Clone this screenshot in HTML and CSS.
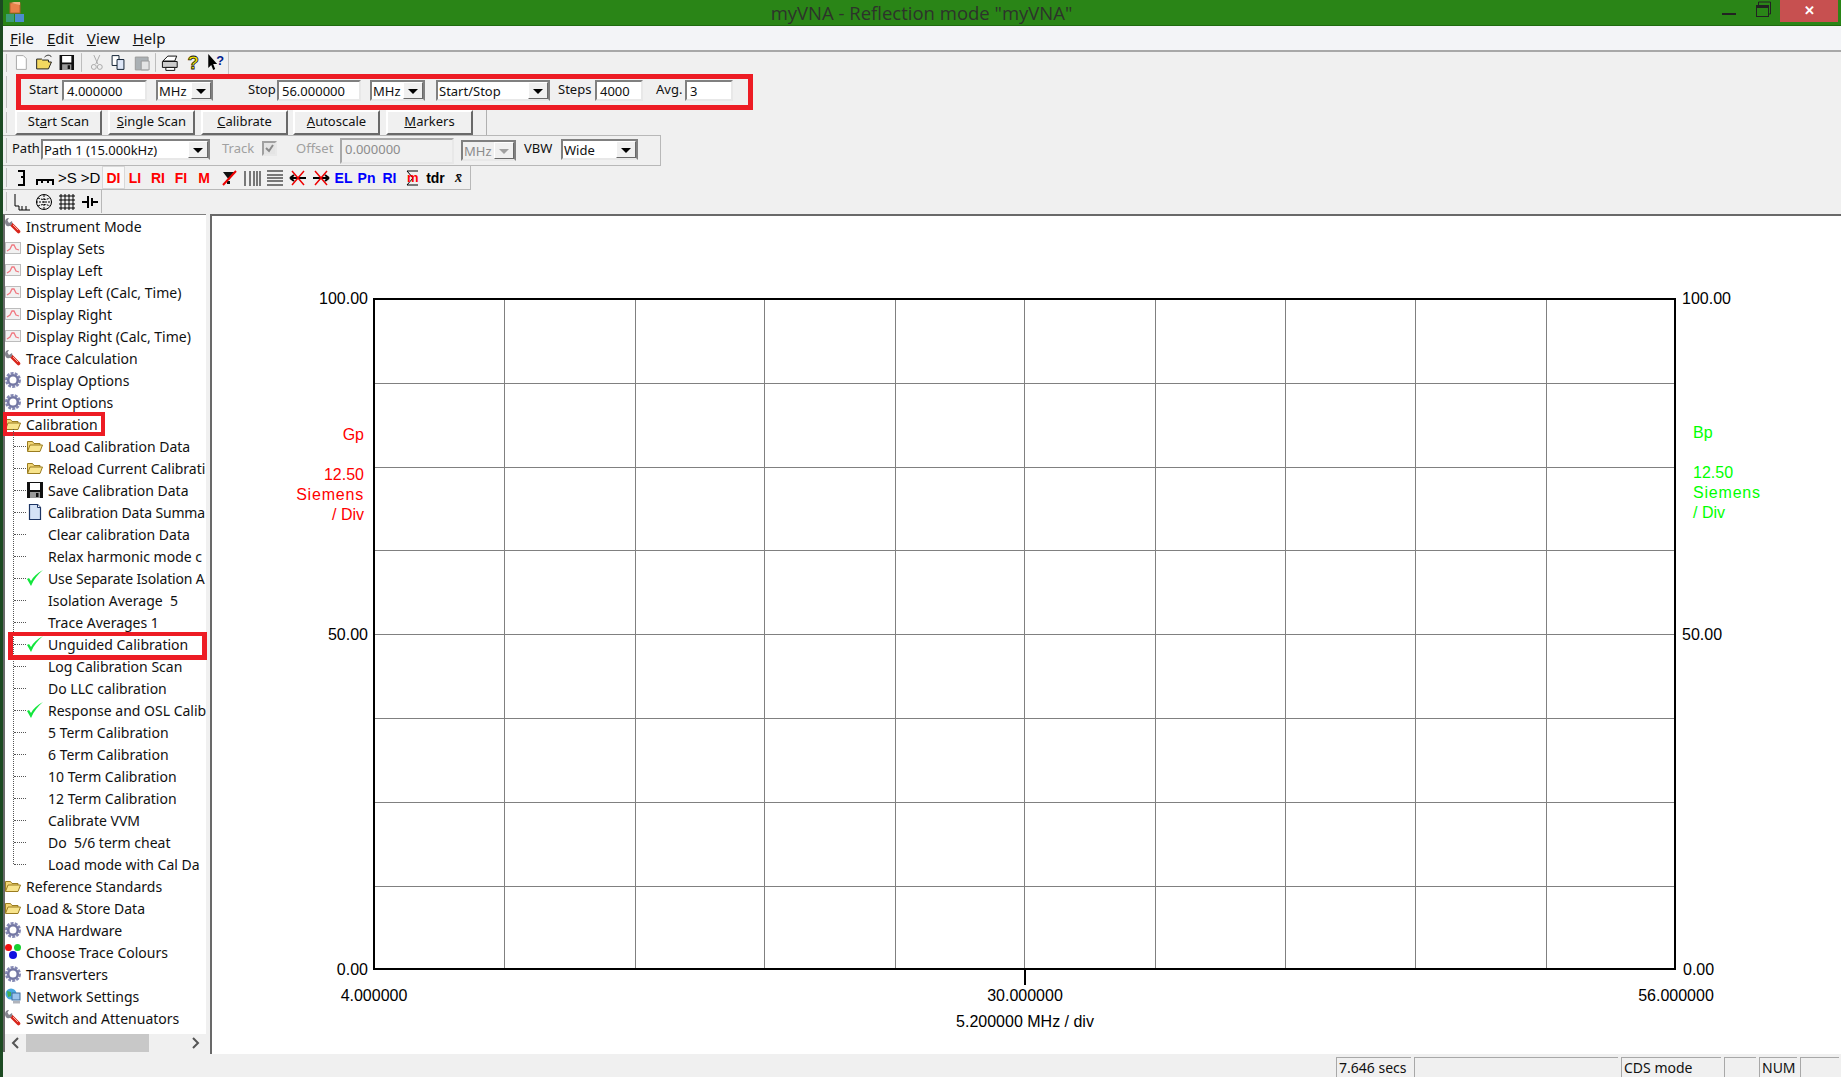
FILE: index.html
```html
<!DOCTYPE html>
<html lang="en">
<head>
<meta charset="UTF-8">
<title>myVNA</title>
<link rel="stylesheet" href="styles.css">
</head>
<body>
<svg class="defs" width="0" height="0">
  <symbol id="i-wrench" viewBox="0 0 16 16"><path d="M6.500 6.500l7 7" stroke="#d8261c" stroke-width="3.600" stroke-linecap="round"/><path d="M0 4c0-2 1-4 4-4L2.500 2.500 4 5l3-2c1 3-1 6-5 5C1 7.500 0 6 0 4z" fill="#85858e"/><path d="M8 7l5 5" stroke="#f6b0a0"/></symbol>
  <symbol id="i-chart" viewBox="0 0 16 16"><rect x=".5" y="2.500" width="15" height="11" fill="#f2f2f2" stroke="#bcbcbc"/><path d="M2 11l3-2 2-4 2 0 2 4 3 1" fill="none" stroke="#f07880" stroke-width="1.300"/></symbol>
  <symbol id="i-gear" viewBox="0 0 16 16"><circle cx="8" cy="8" r="6.800" fill="none" stroke="#8488b4" stroke-width="2.400" stroke-dasharray="3 1.200"/><circle cx="8" cy="8" r="4.800" fill="none" stroke="#7478a4" stroke-width="2.600"/></symbol>
  <symbol id="i-folder" viewBox="0 0 16 16"><path d="M.5 13V3.500h5l1.500 2h6v1.500" fill="#f2d674" stroke="#9a7c20"/><path d="M.5 13.500l2.500-6.500h12.500l-2.500 6.500z" fill="#f8e48c" stroke="#9a7c20"/></symbol>
  <symbol id="i-save" viewBox="0 0 16 16"><path d="M0 0h16v16H0z" fill="#111"/><path d="M3 1h10v7H3z" fill="#fff"/><path d="M3 10h10v6H3z" fill="#999"/><path d="M9 11h2.500v4H9z" fill="#111"/></symbol>
  <symbol id="i-doc" viewBox="0 0 16 16"><path d="M2.500.5h8l3 3v12h-11z" fill="#d4e2f6" stroke="#1c3464" stroke-width="1.200"/><path d="M10.500.5v3h3" fill="#fff" stroke="#1c3464"/></symbol>
  <symbol id="i-check" viewBox="0 0 16 16"><path d="M0 9l2-1 2 3C6 7 10 3 16 0 11 4 7 9 4 16z" fill="#12e63c"/></symbol>
  <symbol id="i-dots" viewBox="0 0 16 16"><circle cx="3.500" cy="3.500" r="3.500" fill="#f01010"/><circle cx="12.500" cy="3.500" r="3.500" fill="#18d030"/><circle cx="8" cy="11" r="4" fill="#1010e0"/></symbol>
  <symbol id="i-net" viewBox="0 0 16 16"><circle cx="6" cy="6" r="5.500" fill="#48a8e0"/><path d="M2 3l4 1 0 4-3 1z" fill="#40b050"/><rect x="7" y="5" width="8" height="7" fill="#9cc4ec" stroke="#3c6c9c"/><path d="M8 13h7v2.500H8z" fill="#b0b4bc"/></symbol>
</svg>

<div class="desk"></div>
<div class="window">
  <div class="titlebar">
    <svg class="app-icon" width="20" height="21" viewBox="0 0 20 21"><rect x="5" y="1" width="10" height="10" fill="#e8824a" stroke="#b06030"/><rect x="1" y="12" width="8" height="8" fill="#3c9c78"/><rect x="10" y="12" width="9" height="8" fill="#4c8cd0"/><path d="M6 1l3-1h6v3" fill="#f0b080"/></svg>
    <div class="title">myVNA - Reflection mode "myVNA"</div>
    <div class="winbtns">
      <span class="win-min"></span>
      <svg class="win-max" width="15" height="16" viewBox="0 0 15 16"><path d="M2.500 4V1H14.500V13H12" fill="none" stroke="#222"/><rect x=".5" y="4.500" width="12" height="11" fill="none" stroke="#222"/><path d="M0 4h13v3H0z" fill="#222"/></svg>
      <span class="win-close">✕</span>
    </div>
  </div>

  <div class="menubar">
    <span><u>F</u>ile</span><span><u>E</u>dit</span><span><u>V</u>iew</span><span><u>H</u>elp</span>
  </div>

  <div class="bar bar-main">
    <svg width="220" height="21" viewBox="0 0 220 21">
      <path d="M5.500 3.500h7l3 3v11h-10z" fill="#fff" stroke="#a8a8a8"/>
      <path d="M26 17V7h5l1 1h6v2h3l-3 7z" fill="#f4d860" stroke="#222"/><path d="M34 5c3-3 6-2 7 0" fill="none" stroke="#222"/>
      <use href="#i-save" x="49" y="3" width="15" height="15"/>
      <path d="M71.500 1v19" stroke="#bbb"/>
      <path d="M84 3l4 9M90 3l-4 9" stroke="#aaa" fill="none"/><circle cx="84" cy="15" r="2.500" fill="none" stroke="#aaa"/><circle cx="90" cy="15" r="2.500" fill="none" stroke="#aaa"/>
      <path d="M102.500 3.500h7v10h-7z" fill="#fff" stroke="#123"/><path d="M107.500 7.500h7v10h-7z" fill="#dfe8f8" stroke="#123"/>
      <path d="M126 5h13v13h-13z" fill="#aab0b4" stroke="#999"/><path d="M132 9h8v9h-8z" fill="#e4e4e4" stroke="#999"/>
      <path d="M146.500 1v19" stroke="#bbb"/>
      <path d="M154 9l5-5h9l-2 5z" fill="#fff" stroke="#111"/><path d="M153.500 9.500h15v6h-15z" fill="#ccc" stroke="#111"/><path d="M157 15.500h9v3h-9z" fill="#fff" stroke="#111"/>
      <text class="ic-q" x="179" y="17">?</text>
      <path d="M200 2v14l3-3 2 5 2-1-2-5h4z" fill="#000"/><text class="ic-q ic-q-blue" x="208" y="13">?</text>
    </svg>
  </div>

  <div class="bar bar-range">
    <div class="range-box">
      <label class="f-start">Start</label>
      <div class="field w85">4.000000</div>
      <div class="combo w57 ml9">MHz<i></i></div>
      <label class="f-stop">Stop</label>
      <div class="field w84">56.000000</div>
      <div class="combo w55 ml9">MHz<i></i></div>
      <div class="combo w114 ml11">Start/Stop<i></i></div>
      <label class="f-steps">Steps</label>
      <div class="field w48">4000</div>
      <label class="f-avg">Avg.</label>
      <div class="field w48">3</div>
    </div>
  </div>

  <div class="bar bar-buttons">
    <button>St<u>a</u>rt Scan</button>
    <button class="ml6"><u>S</u>ingle Scan</button>
    <button class="ml6"><u>C</u>alibrate</button>
    <button class="ml5"><u>A</u>utoscale</button>
    <button class="ml6"><u>M</u>arkers</button>
  </div>

  <div class="bar bar-path">
    <label class="f-path">Path</label>
    <div class="combo w169">Path 1 (15.000kHz)<i></i></div>
    <label class="f-track off">Track</label>
    <span class="tick"><svg width="11" height="11" viewBox="0 0 11 11"><path d="M2 5l3 3 4-6" fill="none" stroke="#8a8a8a" stroke-width="2"/></svg></span>
    <label class="f-offset off">Offset</label>
    <div class="field off-field">0.000000</div>
    <div class="combo w55 ml7 off-combo">MHz<i></i></div>
    <label class="f-vbw">VBW</label>
    <div class="combo w77">Wide<i></i></div>
  </div>

  <div class="bar bar-tools">
    <span class="tb"><svg width="16" height="18" viewBox="0 0 16 18"><path d="M4 2h6v14H4M10 8H7" fill="none" stroke="#000" stroke-width="2"/></svg></span>
    <span class="tb"><svg width="18" height="18" viewBox="0 0 18 18"><path d="M1 16v-5h16v5M6 11v3M12 11v3" fill="none" stroke="#000" stroke-width="2"/></svg></span>
    <span class="tb black">&gt;S</span>
    <span class="tb black">&gt;D</span>
    <span class="tb red pressed">DI</span>
    <span class="tb red">LI</span>
    <span class="tb red">RI</span>
    <span class="tb red">FI</span>
    <span class="tb red">M</span>
    <span class="tb"><svg width="16" height="16" viewBox="0 0 16 16"><path d="M2 2h12l-6 8z" fill="#111"/><path d="M6 11h3v3H6z" fill="#111"/><path d="M15 1L2 15" stroke="#e00" stroke-width="2"/></svg></span>
    <span class="tb"><svg width="18" height="18" viewBox="0 0 18 18"><path d="M2 2v15M7 2v15M11 2v15M14 2v15M17 2v15" stroke="#000"/></svg></span>
    <span class="tb"><svg width="18" height="18" viewBox="0 0 18 18"><path d="M1 2h16M1 6h16M1 9h16M1 12h16M1 16h16" stroke="#000"/></svg></span>
    <span class="tb"><svg width="18" height="18" viewBox="0 0 18 18"><path d="M1 9h16M1 9l4-3M1 9l4 3" fill="none" stroke="#000" stroke-width="2"/><path d="M3 2l12 14M15 2L3 16" stroke="#e00" stroke-width="1.500"/></svg></span>
    <span class="tb"><svg width="18" height="18" viewBox="0 0 18 18"><path d="M1 9h16M17 9l-4-3M17 9l-4 3" fill="none" stroke="#000" stroke-width="2"/><path d="M3 2l12 14M15 2L3 16" stroke="#e00" stroke-width="1.500"/></svg></span>
    <span class="tb blue">EL</span>
    <span class="tb blue">Pn</span>
    <span class="tb blue">RI</span>
    <span class="tb"><svg width="14" height="18" viewBox="0 0 14 18"><path d="M12 2H1l6 7-6 7h11" fill="none" stroke="#000"/><text class="ic-m" x="1" y="13">m</text></svg></span>
    <span class="tb tdr">tdr</span>
    <span class="tb xbar">x̄</span>
  </div>

  <div class="bar bar-view">
    <span class="tb"><svg width="18" height="18" viewBox="0 0 18 18"><path d="M3 1v12h4v4h11M10 13v4M14 13v4" fill="none" stroke="#000"/></svg></span>
    <span class="tb"><svg width="18" height="18" viewBox="0 0 18 18"><circle cx="9" cy="9" r="7.500" fill="none" stroke="#000"/><path d="M1 9h16M3 5c4 2 8 2 12 0M3 13c4-2 8-2 12 0M9 2v14" fill="none" stroke="#000" stroke-dasharray="2 1"/></svg></span>
    <span class="tb"><svg width="18" height="18" viewBox="0 0 18 18"><path d="M1 3h16M1 7h16M1 11h16M1 15h16M3 1v16M7 1v16M11 1v16M15 1v16" stroke="#000"/></svg></span>
    <span class="tb"><svg width="18" height="18" viewBox="0 0 18 18"><path d="M1 9h5M12 9h5M7 3v12M11 5v8" fill="none" stroke="#000" stroke-width="2"/></svg></span>
  </div>

  <div class="main">
    <div class="tree">
      <ul class="rows">
        <li><svg><use href="#i-wrench"/></svg>Instrument Mode</li>
        <li><svg><use href="#i-chart"/></svg>Display Sets</li>
        <li><svg><use href="#i-chart"/></svg>Display Left</li>
        <li><svg><use href="#i-chart"/></svg>Display Left (Calc, Time)</li>
        <li><svg><use href="#i-chart"/></svg>Display Right</li>
        <li><svg><use href="#i-chart"/></svg>Display Right (Calc, Time)</li>
        <li><svg><use href="#i-wrench"/></svg>Trace Calculation</li>
        <li><svg><use href="#i-gear"/></svg>Display Options</li>
        <li><svg><use href="#i-gear"/></svg>Print Options</li>
        <li class="mark-cal"><svg><use href="#i-folder"/></svg>Calibration</li>
      </ul>
      <ul class="rows kids">
        <li><svg><use href="#i-folder"/></svg>Load Calibration Data</li>
        <li><svg><use href="#i-folder"/></svg>Reload Current Calibrati</li>
        <li><svg><use href="#i-save"/></svg>Save Calibration Data</li>
        <li class="fit"><svg><use href="#i-doc"/></svg>Calibration Data Summa</li>
        <li><svg></svg>Clear calibration Data</li>
        <li><svg></svg>Relax harmonic mode c</li>
        <li class="fit"><svg><use href="#i-check"/></svg>Use Separate Isolation A</li>
        <li><svg></svg>Isolation Average&nbsp; 5</li>
        <li><svg></svg>Trace Averages 1</li>
        <li class="mark-ung"><svg><use href="#i-check"/></svg>Unguided Calibration</li>
        <li><svg></svg>Log Calibration Scan</li>
        <li><svg></svg>Do LLC calibration</li>
        <li><svg><use href="#i-check"/></svg>Response and OSL Calib</li>
        <li><svg></svg>5 Term Calibration</li>
        <li><svg></svg>6 Term Calibration</li>
        <li><svg></svg>10 Term Calibration</li>
        <li><svg></svg>12 Term Calibration</li>
        <li><svg></svg>Calibrate VVM</li>
        <li><svg></svg>Do&nbsp; 5/6 term cheat</li>
        <li><svg></svg>Load mode with Cal Da</li>
      </ul>
      <ul class="rows">
        <li><svg><use href="#i-folder"/></svg>Reference Standards</li>
        <li><svg><use href="#i-folder"/></svg>Load &amp; Store Data</li>
        <li><svg><use href="#i-gear"/></svg>VNA Hardware</li>
        <li><svg><use href="#i-dots"/></svg>Choose Trace Colours</li>
        <li><svg><use href="#i-gear"/></svg>Transverters</li>
        <li><svg><use href="#i-net"/></svg>Network Settings</li>
        <li><svg><use href="#i-wrench"/></svg>Switch and Attenuators</li>
      </ul>
      <div class="hscroll">
        <svg width="8" height="12" viewBox="0 0 8 12"><path d="M7 1L2 6l5 5" fill="none" stroke="#555" stroke-width="2"/></svg>
        <span class="thumb"></span>
        <svg width="8" height="12" viewBox="0 0 8 12"><path d="M1 1l5 5-5 5" fill="none" stroke="#555" stroke-width="2"/></svg>
      </div>
    </div>

    <div class="plot">
      <svg width="1629" height="839" viewBox="212 215 1629 839">
        <path class="grid" d="M504.500 298V968M635.500 298V968M764.500 298V968M895.500 298V968M1024.500 298V968M1155.500 298V968M1285.500 298V968M1415.500 298V968M1546.500 298V968"/>
        <path class="grid" d="M374 382.500H1675M374 466.500H1675M374 549.500H1675M374 633.500H1675M374 717.500H1675M374 801.500H1675M374 885.500H1675"/>
        <rect class="frame" x="374" y="298" width="1301" height="670"/>
        <path class="frame" d="M1025 968V984"/>
        <g class="axis">
          <text class="end" x="368" y="303">100.00</text>
          <text class="end" x="368" y="639">50.00</text>
          <text class="end" x="368" y="974">0.00</text>
          <text x="1682" y="303">100.00</text>
          <text x="1682" y="639">50.00</text>
          <text x="1683" y="974">0.00</text>
          <text class="mid" x="374" y="1000">4.000000</text>
          <text class="mid" x="1025" y="1000">30.000000</text>
          <text class="mid" x="1676" y="1000">56.000000</text>
          <text class="mid" x="1025" y="1026">5.200000 MHz / div</text>
        </g>
        <g class="gp">
          <text x="364" y="439">Gp</text>
          <text x="364" y="479">12.50</text>
          <text class="wide" x="364" y="499">Siemens</text>
          <text x="364" y="519">/ Div</text>
        </g>
        <g class="bp">
          <text x="1693" y="437">Bp</text>
          <text x="1693" y="477">12.50</text>
          <text class="wide" x="1693" y="497">Siemens</text>
          <text x="1693" y="517">/ Div</text>
        </g>
      </svg>
    </div>
  </div>

  <div class="statusbar">
    <span class="cell c-time">7.646 secs</span>
    <span class="cell c-blank"></span>
    <span class="cell c-mode">CDS mode</span>
    <span class="cell c-gap"></span>
    <span class="cell c-num">NUM</span>
    <span class="cell c-end"></span>
  </div>
</div>
</body>
</html>
```
FILE: styles.css
```css
* {
  margin: 0;
  padding: 0;
  box-sizing: border-box;
}

body {
  display: flex;
  width: 1844px;
  height: 1086px;
  overflow: hidden;
  background: #fff;
  font-family: "Noto Sans", sans-serif;
  font-size: 14px;
  color: #111;
}

.defs {
  position: absolute;
}

.desk {
  width: 3px;
  height: 1077px;
  background: #1c4a22;
}

.window {
  display: flex;
  flex-direction: column;
  width: 1838px;
  height: 1077px;
  background: #f0f0f0;
}

/* title bar */
.titlebar {
  display: flex;
  align-items: flex-start;
  height: 26px;
  background: #2a8517;
  border-bottom: 1px solid #1f6a10;
}

.app-icon {
  margin: 2px 0 0 2px;
}

.title {
  flex: 1;
  margin-left: 96px;
  text-align: center;
  font-family: "Open Sans", sans-serif;
  font-size: 18.5px;
  line-height: 25px;
  color: #2d332b;
}

.winbtns {
  display: flex;
  align-items: flex-start;
  width: 119px;
}

.win-min {
  width: 14px;
  height: 2px;
  margin-top: 13px;
  background: #222;
}

.win-max {
  margin: 1px 0 0 20px;
}

.win-close {
  width: 58px;
  height: 22px;
  margin-left: 9px;
  background: #c75050;
  color: #fff;
  text-align: center;
  font-size: 13px;
  font-weight: bold;
  line-height: 20px;
}

/* menu */
.menubar {
  display: flex;
  gap: 13px;
  height: 26px;
  padding-left: 7px;
  background: #f3f4f7;
  border-bottom: 2px solid #a8a8a8;
  font-size: 15px;
  line-height: 25px;
}

/* tool rows */
.bar {
  display: flex;
  flex-shrink: 0;
  background: linear-gradient(#c0c0c0, #c0c0c0) no-repeat 3px 2px / 1px calc(100% - 4px);
}

.bar-main {
  width: 226px;
  height: 22px;
  padding-left: 8px;
  border-right: 1px solid #c4c4c4;
}

.bar-range {
  height: 36px;
  padding-left: 13px;
}

.range-box {
  display: flex;
  align-items: flex-start;
  width: 737px;
  height: 36px;
  border: 5px solid #ed1c24;
  font-size: 13px;
}

.range-box label {
  line-height: 21px;
}

.f-start { width: 33px; margin-left: 8px; }
.f-stop { width: 29px; margin-left: 35px; }
.f-steps { width: 37px; margin-left: 8px; }
.f-avg { width: 29px; margin-left: 13px; }

.field,
.combo {
  position: relative;
  flex-shrink: 0;
  height: 21px;
  margin-top: 1px;
  padding-left: 3px;
  background: #fff;
  border: 2px solid;
  border-color: #808080 #e8e8e8 #e8e8e8 #808080;
  font-size: 13px;
  line-height: 18px;
  white-space: nowrap;
}

.combo {
  padding-left: 1px;
  border-color: #808080 #808080 #e8e8e8 #808080;
}

.combo i {
  position: absolute;
  top: 0;
  right: 0;
  bottom: 0;
  width: 20px;
  background: #f0f0f0;
  border: 1px solid;
  border-color: #fff #696969 #696969 #fff;
}

.combo i::after {
  content: "";
  position: absolute;
  top: 6px;
  left: 4px;
  border: 5px solid transparent;
  border-top: 5px solid #000;
  border-bottom: 0;
}

.w48 { width: 48px; }
.w55 { width: 55px; }
.w57 { width: 57px; }
.w77 { width: 77px; }
.w84 { width: 84px; }
.w85 { width: 85px; }
.w114 { width: 114px; }
.w169 { width: 169px; }
.ml5 { margin-left: 5px; }
.ml6 { margin-left: 6px; }
.ml7 { margin-left: 7px; }
.ml9 { margin-left: 9px; }
.ml11 { margin-left: 11px; }

.bar-buttons {
  width: 484px;
  height: 25px;
  padding-left: 12px;
  border-right: 1px solid #b0b0b0;
}

button {
  width: 87px;
  height: 25px;
  padding-bottom: 4px;
  background: #f0f0f0;
  border: 2px solid;
  border-color: #fff #696969 #696969 #fff;
  font-family: "Noto Sans", sans-serif;
  font-size: 13px;
  color: #111;
}

.bar-path {
  align-items: flex-start;
  width: 658px;
  height: 31px;
  padding-left: 9px;
  padding-top: 2px;
  border-top: 1px solid #b8b8b8;
  border-bottom: 1px solid #b8b8b8;
  border-right: 1px solid #b8b8b8;
  font-size: 13px;
}

.bar-path label {
  line-height: 21px;
}

.f-path { width: 29px; }
.f-track { width: 40px; margin-left: 12px; }
.f-offset { width: 44px; }
.f-vbw { width: 37px; margin-left: 8px; }
.off { color: #a0a0a0; }

.tick {
  display: flex;
  width: 15px;
  height: 15px;
  margin: 3px 19px 0 0;
  border: 2px solid #a0a0a0;
  border-right-color: #e8e8e8;
  border-bottom-color: #e8e8e8;
  background: #e4e4e4;
}

.off-field {
  width: 114px;
  height: 26px;
  margin-top: 0;
  background: #f0f0f0;
  border-color: #a8a8a8 #e8e8e8 #e8e8e8 #a8a8a8;
  color: #8c8c8c;
}

.off-combo {
  margin-top: 2px;
  background: #f0f0f0;
  color: #8c8c8c;
}

.off-combo i::after {
  border-top-color: #a0a0a0;
}

.bar-tools,
.bar-view {
  align-items: center;
  height: 24px;
  padding-left: 7px;
  border-bottom: 1px solid #b8b8b8;
  border-right: 1px solid #b8b8b8;
}

.bar-tools {
  width: 468px;
}

.bar-view {
  width: 99px;
  height: 23px;
  border-bottom: 0;
}

.tb {
  display: flex;
  align-items: center;
  justify-content: center;
  width: 23px;
  height: 23px;
  font-family: "Liberation Sans", sans-serif;
  font-size: 14px;
  font-weight: bold;
}

.red {
  padding-right: 3px;
  color: #f00;
}

.blue { color: #00f; }

.black {
  color: #000;
  font-weight: normal;
  font-size: 15px;
}

.tdr { color: #000; }

.pressed {
  padding-right: 0;
  background: #f8f8f8;
  border: 1px solid #d8d8d8;
}

.xbar {
  font-family: "Liberation Serif", serif;
  font-style: italic;
}

.ic-q {
  font-family: "Liberation Sans", sans-serif;
  font-size: 19px;
  font-weight: bold;
  fill: #f6ea00;
  stroke: #111;
  stroke-width: .8px;
}

.ic-q-blue {
  font-size: 13px;
  fill: #001c8c;
  stroke: none;
}

.ic-m {
  font-family: "Liberation Sans", sans-serif;
  font-size: 13px;
  font-weight: bold;
  fill: #f00;
}

/* tree and plot */
.main {
  display: flex;
  flex: 1;
  min-height: 0;
  margin-top: 1px;
}

.tree {
  display: flex;
  flex-direction: column;
  width: 203px;
  height: 838px;
  background: #fff;
  border-top: 1px solid #808080;
  border-left: 2px solid #696969;
}

.rows {
  list-style: none;
}

.rows li {
  position: relative;
  display: flex;
  align-items: center;
  gap: 5px;
  height: 22px;
  white-space: nowrap;
}

.rows svg {
  flex-shrink: 0;
  width: 16px;
  height: 16px;
}

.rows .fit {
  letter-spacing: -.15px;
}

.kids {
  position: relative;
}

.kids::before {
  content: "";
  position: absolute;
  left: 8px;
  top: -6px;
  bottom: 11px;
  border-left: 1px dotted #555;
}

.kids li {
  padding-left: 22px;
}

.kids li::before {
  content: "";
  position: absolute;
  left: 9px;
  top: 11px;
  width: 12px;
  border-top: 1px dotted #555;
}

.mark-cal::after {
  content: "";
  position: absolute;
  left: -2px;
  top: -1px;
  width: 102px;
  height: 24px;
  box-sizing: border-box;
  border: 4px solid #ed1c24;
}

.mark-ung::after {
  content: "";
  position: absolute;
  left: 3px;
  top: -1px;
  width: 199px;
  height: 28px;
  box-sizing: border-box;
  border: 5px solid #ed1c24;
  border-top-width: 4px;
}

.hscroll {
  display: flex;
  align-items: center;
  justify-content: space-between;
  flex-shrink: 0;
  height: 18px;
  margin-top: 5px;
  padding: 0 6px;
  background: #f0f0f0;
}

.thumb {
  width: 123px;
  height: 18px;
  margin: 0 auto 0 7px;
  background: #c8c8c8;
}

.plot {
  width: 1631px;
  height: 840px;
  margin-left: 4px;
  padding-left: 2px;
  padding-top: 1px;
  background: #fff;
  border-top: 2px solid #696969;
  border-left: 2px solid #696969;
}

.plot svg {
  display: block;
  margin: -1px 0 0 -2px;
}

.grid {
  fill: none;
  stroke: #808080;
  stroke-width: 1;
  shape-rendering: crispEdges;
}

.frame {
  fill: none;
  stroke: #000;
  stroke-width: 2;
  shape-rendering: crispEdges;
}

.plot text {
  font-family: "Liberation Sans", sans-serif;
  font-size: 16px;
}

.plot .wide {
  letter-spacing: .8px;
}

.axis text {
  fill: #000;
}

.axis .end {
  text-anchor: end;
}

.axis .mid {
  text-anchor: middle;
}

.gp text {
  fill: #f00;
  text-anchor: end;
}

.bp text {
  fill: #0f0;
}

/* status bar */
.statusbar {
  display: flex;
  gap: 3px;
  height: 20px;
  padding-left: 1333px;
}

.cell {
  height: 20px;
  padding-left: 2px;
  border-top: 1px solid #a8a8a8;
  border-left: 1px solid #a8a8a8;
  line-height: 20px;
  white-space: nowrap;
}

.c-time { width: 75px; }
.c-blank { width: 204px; }
.c-mode { width: 100px; }
.c-gap { width: 32px; }
.c-num { width: 38px; }
.c-end { width: 39px; }
```
